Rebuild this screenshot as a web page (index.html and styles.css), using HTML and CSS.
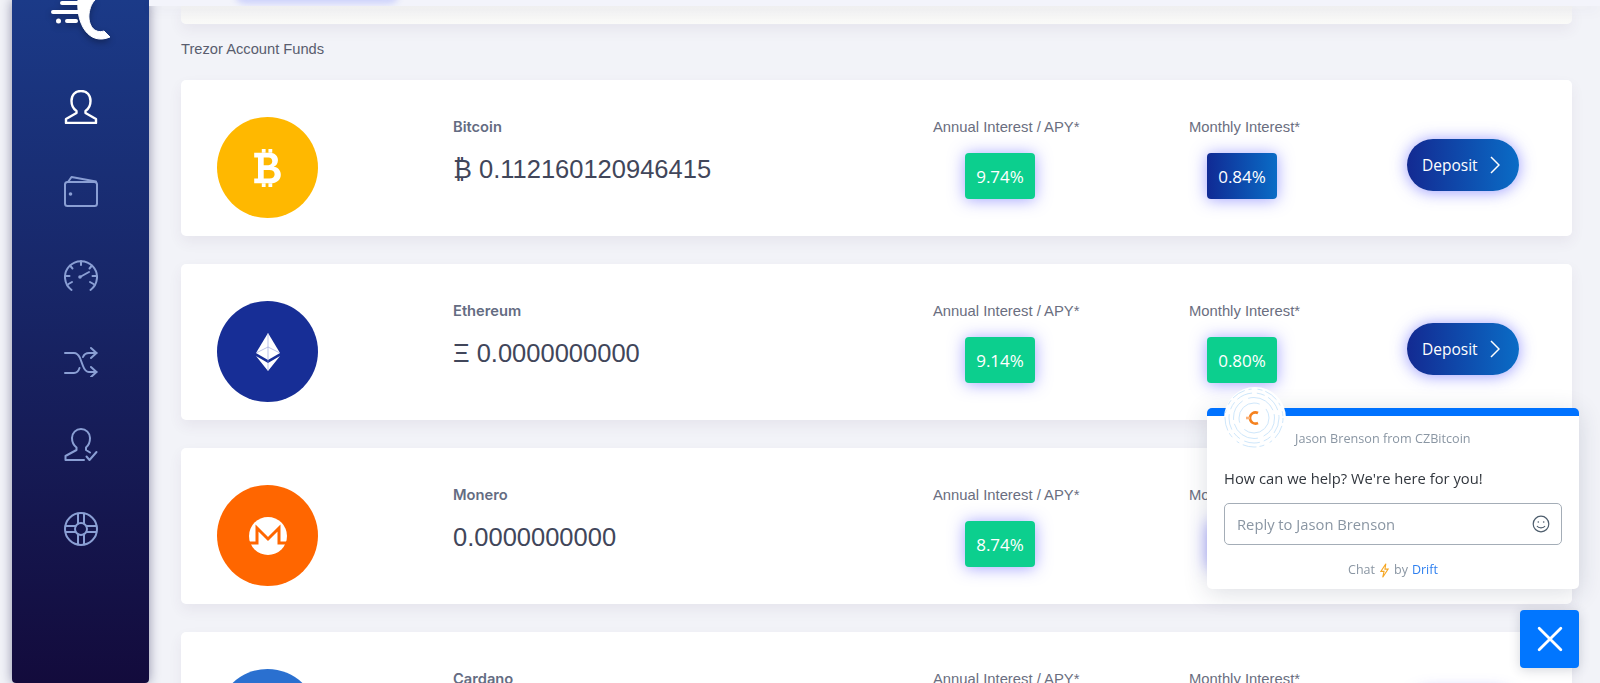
FILE: index.html
```html
<!DOCTYPE html>
<html lang="en">
<head>
    <meta charset="UTF-8">
    <meta name="viewport" content="width=device-width, initial-scale=1.0">
    <title>Account Funds</title>
    <link rel="stylesheet" href="styles.css">
</head>
<body>
    <div class="page">
        <nav class="sidebar">
            <svg class="logo" viewBox="0 0 60 42">
                <path class="logo-c" d="M27 0C25 24 38 46 59 37L53 31C43 34 37 25 38 14C39 7 41 3 44 0Z"/>
                <path class="logo-lines" d="M11 3H30M2 12H28M16 21H25"/>
                <circle cx="7.500" cy="21" r="2.500" fill="#fff"/>
            </svg>
            <svg class="nav-icon active" viewBox="0 0 34 34"><path d="M17 1C11 1 7.500 5 7.500 11C7.500 15 9.500 19 12.500 21V23L2 29V33H32V29L21.500 23V21C24.500 19 26.500 15 26.500 11C26.500 5 23 1 17 1Z"/></svg>
            <svg class="nav-icon" viewBox="0 0 34 34"><path d="M4 8L7.500 3L32 7.500"/><rect x="1" y="8" width="32" height="24" rx="2.500"/><circle class="icon-dot" cx="6.500" cy="20" r="1.800"/></svg>
            <svg class="nav-icon" viewBox="0 0 34 34"><path d="M7.500 31A16 16 0 1 1 26.500 31"/><path d="M17 2V6M6 6.500L8.500 9.500M28 6.500L25.500 9.500M1.500 17H5.500M32.500 17H28.500M4.500 25L8 23M29.500 25L26 23"/><path d="M16 18L25 13"/><circle class="icon-dot" cx="16" cy="18" r="1.800"/></svg>
            <svg class="nav-icon" viewBox="0 -4 34 34"><path d="M1 6H10C13 6 14.500 8 16 11L19 19C20.500 23 22 25 25 25H32.500M1 26H10C13 26 14.500 24 15.500 21M19 10C20 7.500 22 6 25 6H32.500"/><path d="M27 1L32.500 6L27 11M27 20L32.500 25L27 30"/></svg>
            <svg class="nav-icon" viewBox="0 0 34 34"><path d="M20 32H1.500V28L12.500 22V19.500C10 17.500 8 13.500 8 10C8 5 12 1 17 1C22 1 26 5 26 10C26 14 24.500 17.500 22 19.500V22L26 24.500"/><path d="M22.500 28.500L25.500 32L32.500 24"/></svg>
            <svg class="nav-icon" viewBox="0 0 34 34"><circle cx="17" cy="17" r="16"/><circle cx="17" cy="17" r="6"/><path d="M14 2V11.500M20 2V11.500M14 22.500V32M20 22.500V32M2 14H11.500M2 20H11.500M22.500 14H32M22.500 20H32"/></svg>
        </nav>

        <main class="content">
            <div class="top-band"><span class="band-glow"></span></div>
            <div class="card card-stub"></div>
            <p class="section-title">Trezor Account Funds</p>

            <div class="card fund">
                <div class="coin coin-btc">
                    <svg viewBox="0 0 30 40" class="coin-mark btc-mark"><path d="M1 4H17C23 4 26 7.500 26 11.500C26 15 24.500 17.500 21.500 18.500C26 19.500 29 22.500 29 27C29 32 25.500 36 18 36H1V31H5V9H1ZM11 9V17H16C18.500 17 20 15.500 20 13C20 10.500 18.500 9 16 9ZM11 22V31H17C20.500 31 22.500 29.500 22.500 26.500C22.500 23.500 20.500 22 17 22Z" fill-rule="evenodd"/><path d="M9 0H13V4H9ZM16 0H20V4H16ZM9 36H13V40H9ZM16 36H20V40H16Z"/></svg>
                </div>
                <div class="fund-info">
                    <div class="fund-name">Bitcoin</div>
                    <div class="fund-value">₿ 0.112160120946415</div>
                </div>
                <div class="rate rate-annual">
                    <div class="rate-label">Annual Interest / APY*</div>
                    <div class="badge badge-green">9.74%</div>
                </div>
                <div class="rate rate-monthly">
                    <div class="rate-label">Monthly Interest*</div>
                    <div class="badge badge-blue">0.84%</div>
                </div>
                <a class="deposit" href="#">Deposit <svg viewBox="0 0 10 18"><path d="M1 1L9 9L1 17"/></svg></a>
            </div>

            <div class="card fund">
                <div class="coin coin-eth">
                    <svg viewBox="0 0 24 38" class="coin-mark eth-mark"><path d="M12 0L24 20L12 27L0 20Z"/><path d="M0 23L12 30L24 23L12 38Z"/><path class="eth-line" d="M12 0V38M0 20L12 14L24 20"/></svg>
                </div>
                <div class="fund-info">
                    <div class="fund-name">Ethereum</div>
                    <div class="fund-value">Ξ 0.0000000000</div>
                </div>
                <div class="rate rate-annual">
                    <div class="rate-label">Annual Interest / APY*</div>
                    <div class="badge badge-green">9.14%</div>
                </div>
                <div class="rate rate-monthly">
                    <div class="rate-label">Monthly Interest*</div>
                    <div class="badge badge-green">0.80%</div>
                </div>
                <a class="deposit" href="#">Deposit <svg viewBox="0 0 10 18"><path d="M1 1L9 9L1 17"/></svg></a>
            </div>

            <div class="card fund">
                <div class="coin coin-xmr">
                    <svg viewBox="0 0 38 38" class="coin-mark xmr-mark"><circle cx="19" cy="19" r="19"/><path class="xmr-line" d="M-1 26H8V11L19 22L30 11V26H39"/></svg>
                </div>
                <div class="fund-info">
                    <div class="fund-name">Monero</div>
                    <div class="fund-value">0.0000000000</div>
                </div>
                <div class="rate rate-annual">
                    <div class="rate-label">Annual Interest / APY*</div>
                    <div class="badge badge-green">8.74%</div>
                </div>
                <div class="rate rate-monthly">
                    <div class="rate-label">Monthly Interest*</div>
                    <div class="badge badge-blue">0.70%</div>
                </div>
                <a class="deposit" href="#">Deposit <svg viewBox="0 0 10 18"><path d="M1 1L9 9L1 17"/></svg></a>
            </div>

            <div class="card fund">
                <div class="coin coin-ada"></div>
                <div class="fund-info">
                    <div class="fund-name">Cardano</div>
                    <div class="fund-value">0.0000000000</div>
                </div>
                <div class="rate rate-annual">
                    <div class="rate-label">Annual Interest / APY*</div>
                    <div class="badge badge-green">6.00%</div>
                </div>
                <div class="rate rate-monthly">
                    <div class="rate-label">Monthly Interest*</div>
                    <div class="badge badge-green">0.50%</div>
                </div>
                <a class="deposit" href="#">Deposit <svg viewBox="0 0 10 18"><path d="M1 1L9 9L1 17"/></svg></a>
            </div>
        </main>
    </div>

    <div class="chat">
        <div class="chat-avatar">
            <svg viewBox="0 0 62 62" fill="none" stroke="#cfe7fb" stroke-width="1">
                <circle cx="30" cy="31" r="29" stroke-dasharray="5 3 14 4 3 6"/>
                <circle cx="30" cy="31" r="25" stroke-dasharray="16 5 8 4"/>
                <circle cx="30" cy="31" r="20.500" stroke-dasharray="22 6 30 4"/>
                <circle cx="30" cy="31" r="15" stroke-dasharray="34 8"/>
                <path d="M34 26C30 24 26 27 26 31C26 35 30 38 34 36" stroke="#f5821f" stroke-width="2.600"/>
                <path d="M22 31H26" stroke="#fbb27a" stroke-width="2.600"/>
            </svg>
        </div>
        <div class="chat-from">Jason Brenson from CZBitcoin</div>
        <div class="chat-message">How can we help? We're here for you!</div>
        <div class="chat-input">
            <span>Reply to Jason Brenson</span>
            <svg viewBox="0 0 18 18" fill="none" stroke="#4d5d6c" stroke-width="1.200"><circle cx="9" cy="9" r="7.800"/><circle cx="6.300" cy="7" r=".8" fill="#4d5d6c" stroke="none"/><circle cx="11.700" cy="7" r=".8" fill="#4d5d6c" stroke="none"/><path d="M5 11C6.500 13.500 11.500 13.500 13 11"/></svg>
        </div>
        <div class="chat-footer">
            Chat
            <svg viewBox="0 0 10 16"><path d="M6.500 .5L1 9H4.500L3 15.500L9 6.500H5.500Z"/></svg>
            by <span class="chat-brand">Drift</span>
        </div>
    </div>
    <button class="chat-close" type="button" aria-label="Close chat">
        <svg viewBox="0 0 24 24"><path d="M2 2L22 22M22 2L2 22"/></svg>
    </button>
</body>
</html>
```
FILE: styles.css
```css
html, body {
    margin: 0;
    height: 100%;
    overflow: hidden;
}
body {
    font-family: 'Liberation Sans', Arial, sans-serif;
    color: #5d5f6e;
    background-color: #f2f3f8;
}
.page {
    display: flex;
    height: 683px;
    overflow: hidden;
}

/* sidebar */
.sidebar {
    flex: none;
    width: 137px;
    margin-left: 12px;
    height: 683px;
    border-radius: 0 0 4px 4px;
    background: linear-gradient(180deg, #1b3a88 0%, #130b3c 100%);
    box-shadow: 0 0 12px rgba(20, 20, 70, 0.45);
    display: flex;
    flex-direction: column;
    align-items: center;
    gap: 50.400px;
    position: relative;
}
.logo {
    flex: none;
    width: 60px;
    height: 42px;
    margin-bottom: -2.400px;
    filter: drop-shadow(0 3px 3px rgba(0, 0, 0, 0.3));
}
.logo-c {
    fill: #fff;
    stroke: #fff;
    stroke-width: 1;
    stroke-linejoin: round;
}
.logo-lines {
    fill: none;
    stroke: #fff;
    stroke-width: 4;
    stroke-linecap: round;
}
.nav-icon {
    flex: none;
    width: 34px;
    height: 34px;
    fill: none;
    stroke: #8a9fd4;
    stroke-width: 2;
    stroke-linecap: round;
    stroke-linejoin: round;
}
.nav-icon.active {
    stroke: #fff;
    stroke-width: 2.400;
}
.icon-dot {
    fill: #8a9fd4;
    stroke: none;
}

/* main column */
.content {
    flex: 1;
    min-width: 0;
    padding: 0 28px 0 32px;
}
.top-band {
    height: 6px;
    margin: 0 -28px 0 -32px;
    position: relative;
    z-index: 1;
    background-color: #f3f4fb;
    box-shadow: 0 4px 14px rgba(60, 60, 100, 0.05);
    overflow: hidden;
}
.band-glow {
    position: absolute;
    left: 86px;
    top: -6px;
    width: 164px;
    height: 10px;
    border-radius: 0 0 16px 16px;
    background-color: #cdd2fb;
    filter: blur(3px);
}
.card {
    background-color: #fff;
    border-radius: 5px;
    box-shadow: 0 6px 14px rgba(82, 63, 105, 0.07);
}
.card-stub {
    height: 18px;
    border-radius: 0 0 5px 5px;
    background: linear-gradient(180deg, #f2f2f3 0%, #fafaf8 100%);
}
.section-title {
    margin: 0;
    padding: 17px 0 22px;
    font-size: 14.700px;
    line-height: 17px;
    color: #595d6e;
}
.fund {
    display: flex;
    align-items: flex-start;
    height: 156px;
    margin-bottom: 28px;
}
.coin {
    flex: none;
    width: 101px;
    height: 101px;
    margin: 37px 0 0 36px;
    border-radius: 50%;
    display: flex;
    align-items: center;
    justify-content: center;
}
.coin-btc { background-color: #ffb800; }
.coin-eth { background-color: #172e96; }
.coin-xmr { background-color: #ff6600; }
.coin-ada { background-color: #2a70d0; }
.coin-mark { fill: #fff; }
.btc-mark { width: 29px; height: 38px; }
.eth-mark { width: 24px; height: 38px; }
.xmr-mark { width: 38px; height: 38px; }
.eth-line {
    fill: none;
    stroke: #8f9bd6;
    stroke-width: 0.600;
}
.xmr-line {
    fill: none;
    stroke: #ff6600;
    stroke-width: 3;
}
.fund-info {
    flex: none;
    width: 480px;
    margin-left: 135px;
    padding-top: 39px;
}
.fund-name {
    font-family: Inter, sans-serif;
    font-size: 14.700px;
    font-weight: 600;
    line-height: 17px;
    color: #646c82;
}
.fund-value {
    margin-top: 15px;
    font-size: 25.500px;
    line-height: 36px;
    color: #41465a;
}
.rate {
    flex: none;
    display: flex;
    flex-direction: column;
    align-items: flex-start;
    padding-top: 39px;
}
.rate-annual { width: 200px; }
.rate-monthly { width: 110px; margin-left: 56px; }
.rate-annual .badge { margin-left: 32px; }
.rate-monthly .badge { margin-left: 18px; }
.rate-label {
    font-size: 14.800px;
    line-height: 17px;
    white-space: nowrap;
    color: #6a6e80;
}
.badge {
    width: 70px;
    height: 46px;
    margin-top: 17px;
    border-radius: 4px;
    display: flex;
    align-items: center;
    justify-content: center;
    font-family: 'Open Sans', sans-serif;
    font-size: 17px;
    font-weight: 500;
    color: #fff;
    box-shadow: 0 1px 16px rgba(70, 70, 255, 0.5);
}
.badge-green { background-color: #0ccf8e; }
.badge-blue { background: linear-gradient(90deg, #102a94 0%, #0a6cc6 100%); }
.deposit {
    flex: none;
    width: 112px;
    height: 52px;
    box-sizing: border-box;
    padding-left: 15px;
    margin: 59px 0 0 108px;
    border-radius: 26px;
    background: linear-gradient(90deg, #132a92 0%, #0a6cc6 100%);
    box-shadow: 0 1px 16px rgba(70, 70, 255, 0.55);
    display: flex;
    align-items: center;
    gap: 12px;
    font-family: 'Open Sans', sans-serif;
    font-size: 15.500px;
    font-weight: 500;
    color: #fff;
    text-decoration: none;
}
.deposit svg {
    width: 10px;
    height: 18px;
    fill: none;
    stroke: #fff;
    stroke-width: 1.500;
}

/* chat widget */
.chat {
    position: fixed;
    left: 1207px;
    top: 408px;
    width: 372px;
    height: 181px;
    box-sizing: border-box;
    padding: 13px 17px 0;
    border-top: 8px solid #0072ff;
    border-radius: 5px;
    background-color: #fff;
    box-shadow: 0 4px 24px rgba(40, 50, 80, 0.16);
    font-family: 'Open Sans', sans-serif;
}
.chat-avatar {
    position: absolute;
    left: 17px;
    top: -29px;
    width: 62px;
    height: 62px;
    border-radius: 50%;
    background-color: #fff;
}
.chat-avatar svg {
    display: block;
    width: 62px;
    height: 62px;
}
.chat-from {
    margin-left: 71px;
    font-size: 12.650px;
    line-height: 18px;
    color: #8a96a3;
}
.chat-message {
    margin-top: 21px;
    font-size: 14.750px;
    line-height: 20px;
    color: #32373e;
}
.chat-input {
    margin-top: 15px;
    height: 42px;
    box-sizing: border-box;
    padding: 0 11px 0 12px;
    border: 1px solid #a4adb7;
    border-radius: 5px;
    display: flex;
    align-items: center;
    justify-content: space-between;
    font-size: 14.750px;
    color: #8a96a3;
}
.chat-input svg {
    width: 18px;
    height: 18px;
}
.chat-footer {
    margin-top: 17px;
    display: flex;
    justify-content: center;
    align-items: center;
    gap: 5px;
    font-size: 12.500px;
    line-height: 16px;
    color: #8a96a3;
}
.chat-footer svg {
    width: 9px;
    height: 15px;
    fill: none;
    stroke: #f5a623;
    stroke-width: 1.200;
}
.chat-brand {
    color: #2f80f0;
    margin-left: -1px;
}
.chat-close {
    position: fixed;
    left: 1520px;
    top: 610px;
    width: 59px;
    height: 58px;
    padding: 0;
    border: none;
    border-radius: 4px;
    background-color: #0176ff;
    box-shadow: 0 2px 12px rgba(40, 50, 80, 0.2);
    display: flex;
    align-items: center;
    justify-content: center;
}
.chat-close svg {
    width: 26px;
    height: 26px;
    fill: none;
    stroke: #fff;
    stroke-width: 2.600;
    stroke-linecap: round;
}
```
